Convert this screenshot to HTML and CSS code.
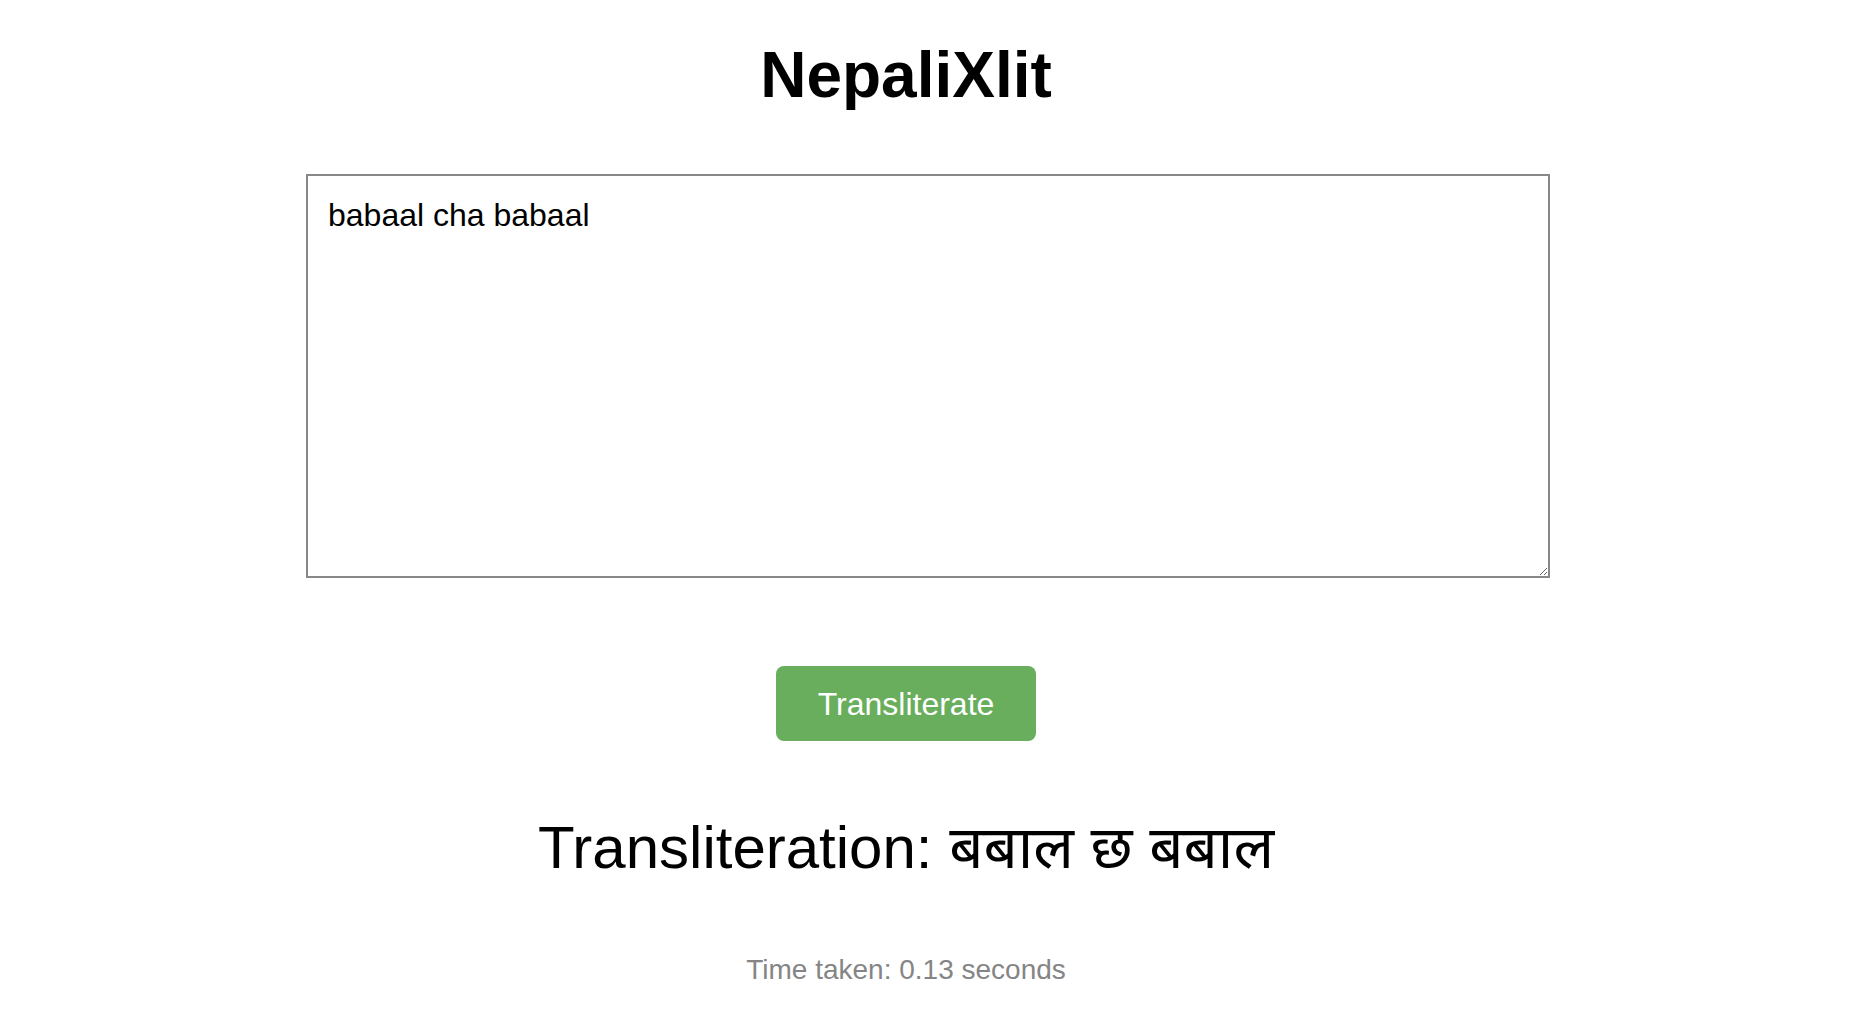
FILE: index.html
```html
<!DOCTYPE html>
<html lang="en">
<head>
<meta charset="utf-8">
<title>NepaliXlit</title>
<link rel="stylesheet" href="styles.css">
</head>
<body>
<main class="page">
  <h1 class="title">NepaliXlit</h1>
  <textarea class="input" spellcheck="true">babaal cha babaal</textarea>
  <div class="actions">
    <button class="btn" type="button">Transliterate</button>
  </div>
  <p class="result">Transliteration: बबाल छ बबाल</p>
  <p class="time">Time taken: 0.13 seconds</p>
</main>
</body>
</html>
```

FILE: styles.css
```css
html, body {
  margin: 0;
  background: #ffffff;
}
body {
  padding-right: 56px;
  font-family: "Liberation Sans", Arial, "Noto Sans", sans-serif;
  color: #000;
}
.page {
  width: 1200px;
  margin: 0 auto;
  padding-top: 39px;
  display: flex;
  flex-direction: column;
  align-items: center;
}
.title {
  margin: 0;
  font-size: 64px;
  line-height: 1.15;
  font-weight: 700;
  text-align: center;
}
.input {
  align-self: flex-start;
  margin-top: 61px;
  width: 1200px;
  height: 359px;
  padding: 21px 20px 20px;
  border: 2px solid #888888;
  border-radius: 0;
  font-family: "Liberation Sans", Arial, sans-serif;
  font-size: 32px;
  line-height: 1.15;
  color: #000;
  background: #fff;
  outline: none;
  resize: both;
  box-sizing: content-box;
}
.actions {
  margin-top: 88px;
  display: flex;
  justify-content: center;
}
.btn {
  width: 260px;
  height: 75px;
  padding: 2px 0 0;
  border: none;
  border-radius: 8px;
  background: #68ae5c;
  color: #ffffff;
  font-family: "Liberation Sans", Arial, sans-serif;
  font-size: 32px;
  line-height: 1;
  cursor: pointer;
}
.result {
  margin: 72px 0 0;
  font-size: 60px;
  line-height: 69px;
  text-align: center;
  white-space: nowrap;
}
.time {
  margin: 72px 0 0;
  font-size: 28px;
  line-height: 32px;
  color: #858585;
  text-align: center;
}
```
